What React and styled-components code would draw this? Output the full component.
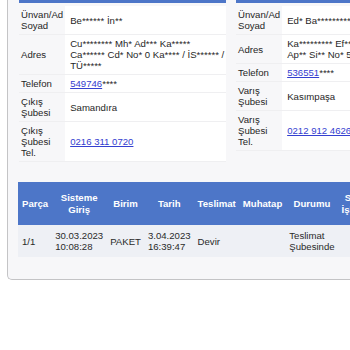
import React from 'react';
import styled, { createGlobalStyle } from 'styled-components';

const Global = createGlobalStyle`
  html, body { margin: 0; padding: 0; background: #fff; overflow: hidden; }
  body {
    font-family: "Liberation Sans", Arial, Helvetica, sans-serif;
    font-size: 9.6px;
    color: #1f1f1f;
  }
`;

const BLUE = '#4d76c8';

const Frame = styled.div`
  margin-left: 7px;
  border-left: 1px solid #c4c4c6;
  border-bottom: 1px solid #c4c4c6;
  border-bottom-left-radius: 5px;
  background: #f7f7f9;
  padding: 0 0 22px 10px;
`;

const Panels = styled.div`
  display: flex;
  gap: 10px;
  margin-left: 1px;
`;

const Panel = styled.section`
  flex: 0 0 207px;
  width: 207px;
`;

const PanelBar = styled.div`
  height: 3px;
  background: ${BLUE};
`;

const InfoTable = styled.table`
  width: 100%;
  border-collapse: collapse;
  margin-top: 3px;
`;

const Label = styled.th`
  width: 1px;
  text-align: left;
  font-weight: normal;
  padding: 3px 2px;
  line-height: 11px;
  vertical-align: middle;
  border-bottom: 1px solid #efeff1;
`;

const Value = styled.td`
  background: #fff;
  padding: 3px 0 3px 5px;
  line-height: 11px;
  vertical-align: middle;
  border-bottom: 1px solid #efeff1;
`;

const Link = styled.a`
  color: #3440d0;
  text-decoration: underline;
`;

const Grid = styled.table`
  margin-top: 20px;
  border-collapse: collapse;
  width: 1px;
`;

const Th = styled.th`
  background: ${BLUE};
  color: #fff;
  font-weight: bold;
  text-align: center;
  padding: 10px 3.5px;
  line-height: 11.5px;
  vertical-align: middle;
  &:first-child { padding-left: 4px; }
`;

const Td = styled.td`
  background: #eef0f5;
  color: #2a2a2a;
  text-align: left;
  padding: 5px 3.5px;
  line-height: 11px;
  vertical-align: middle;
  &:first-child { padding-left: 4px; }
`;

const InfoPanel = ({ rows }) => (
  <Panel>
    <PanelBar />
    <InfoTable>
      <tbody>
        {rows.map(([label, value], i) => (
          <tr key={i}>
            <Label>{label}</Label>
            <Value>{value}</Value>
          </tr>
        ))}
      </tbody>
    </InfoTable>
  </Panel>
);

const sender = [
  ['Ünvan/Ad Soyad', 'Be****** İn**'],
  ['Adres', 'Cu******** Mh* Ad*** Ka***** Ca****** Cd* No* 0 Ka**** / İS****** / TÜ*****'],
  ['Telefon', <><Link href="#">549746</Link>****</>],
  ['Çıkış Şubesi', 'Samandıra'],
  ['Çıkış Şubesi Tel.', <Link href="#">0216 311 0720</Link>],
];

const receiver = [
  ['Ünvan/Ad Soyad', 'Ed* Ba************'],
  ['Adres', 'Ka********* Ef*** Mh* Kı********* Sk* Ap** Si** No* 5 / Be****** / İS******'],
  ['Telefon', <><Link href="#">536551</Link>****</>],
  ['Varış Şubesi', 'Kasımpaşa'],
  ['Varış Şubesi Tel.', <Link href="#">0212 912 4626</Link>],
];

const headers = ['Parça', 'Sisteme Giriş', 'Birim', 'Tarih', 'Teslimat', 'Muhatap', 'Durumu', 'Son İşlem'];
const rows = [
  ['1/1', '30.03.2023 10:08:28', 'PAKET', '3.04.2023 16:39:47', 'Devir', '', 'Teslimat Şubesinde', ''],
];

export default function App() {
  return (
    <>
      <Global />
      <Frame>
        <Panels>
          <InfoPanel rows={sender} />
          <InfoPanel rows={receiver} />
        </Panels>
        <Grid>
          <thead>
            <tr>
              {headers.map((h) => (
                <Th key={h}>{h}</Th>
              ))}
            </tr>
          </thead>
          <tbody>
            {rows.map((r, i) => (
              <tr key={i}>
                {r.map((c, j) => (
                  <Td key={j}>{c}</Td>
                ))}
              </tr>
            ))}
          </tbody>
        </Grid>
      </Frame>
    </>
  );
}
